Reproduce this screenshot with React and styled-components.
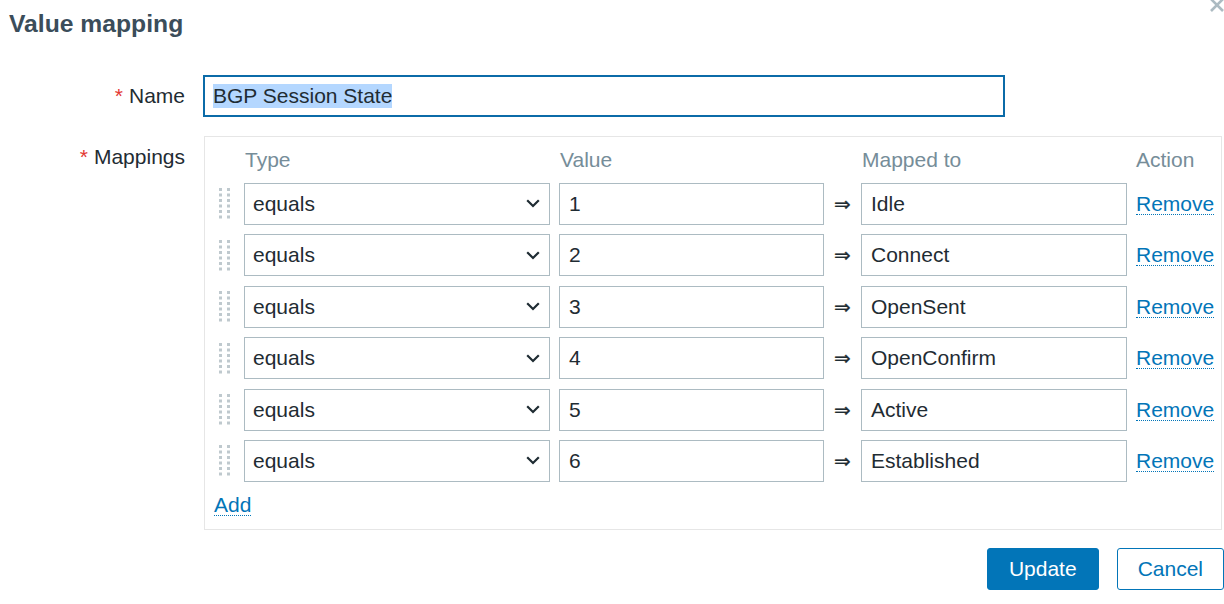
import React from "react";
import styled, { createGlobalStyle } from "styled-components";

const Global = createGlobalStyle`
  html, body { margin: 0; padding: 0; background: #fff; }
  body { font-family: "Liberation Sans", Arial, sans-serif; color: #1f2c33; }
  * { box-sizing: border-box; }
`;

const Dialog = styled.div`
  position: relative;
  width: 1224px;
  height: 604px;
  overflow: hidden;
`;

const Title = styled.h1`
  margin: 9px 0 0 9px;
  font-size: 24.7px;
  line-height: 30px;
  font-weight: bold;
  color: #3b4d5a;
`;

const Close = styled.button`
  position: absolute;
  top: -4px;
  right: -2px;
  width: 18px;
  height: 18px;
  padding: 0;
  border: 0;
  background: none;
  color: #acbbc2;
`;

const Form = styled.div`
  display: grid;
  grid-template-columns: 185px 1fr;
  column-gap: 18px;
  row-gap: 19px;
  margin-top: 36px;
  padding-right: 2px;
`;

const Label = styled.label`
  text-align: right;
  font-size: 21px;
  line-height: 42px;
  color: #1f2c33;
`;

const Req = styled.span`
  color: #e33734;
  margin-right: 6px;
`;

const NameBox = styled.div`
  width: 802px;
  height: 42px;
  border: 2px solid #0b6ba8;
  padding: 0 8px;
  display: flex;
  align-items: center;
  font-size: 21px;
  color: #1f2c33;
`;

const Selected = styled.span`
  background: #b4d7ff;
`;

const Table = styled.div`
  margin-left: 1px;
  border: 1px solid #e6e6e6;
  padding: 11px 0 10px;
`;

const COLS = "30px 306px 265px 19px 266px auto";

const HeaderRow = styled.div`
  display: grid;
  grid-template-columns: ${COLS};
  column-gap: 9px;
  height: 24px;
  margin-bottom: 6.3px;
  font-size: 21px;
  line-height: 24px;
  color: #768d99;
`;

const HeadCell = styled.div`
  padding-left: ${(p) => (p.$flush ? 0 : 1)}px;
`;

const Row = styled.div`
  display: grid;
  grid-template-columns: ${COLS};
  column-gap: 9px;
  align-items: center;
  height: 51.4px;
`;

const Handle = styled.div`
  padding-left: 14px;
  display: flex;
  align-items: center;
`;

const Select = styled.div`
  height: 42px;
  border: 1px solid #acbbc2;
  padding: 0 9px 0 8px;
  display: flex;
  align-items: center;
  justify-content: space-between;
  font-size: 21px;
  color: #1f2c33;
`;

const Input = styled.div`
  height: 42px;
  border: 1px solid #acbbc2;
  padding: 0 9px;
  display: flex;
  align-items: center;
  font-size: 21px;
  color: #1f2c33;
`;

const Arrow = styled.div`
  display: flex;
  justify-content: center;
  font-family: "DejaVu Sans", sans-serif;
  font-size: 20px;
  color: #1f2c33;
  -webkit-text-stroke: 0.3px #1f2c33;
`;

const Link = styled.a`
  justify-self: start;
  display: inline-block;
  font-size: 21px;
  line-height: 21px;
  color: #0275b8;
  text-decoration: none;
  border-bottom: 1px dotted #0275b8;
  cursor: pointer;
`;

const AddWrap = styled.div`
  padding: 7px 0 0 9px;
  height: 32px;
`;

const Footer = styled.div`
  display: flex;
  justify-content: flex-end;
  gap: 18px;
  margin-top: 18px;
`;

const Button = styled.button`
  height: 42px;
  padding: 0 ${(p) => (p.$primary ? 21 : 20)}px;
  border-radius: 3px;
  border: 1px solid #0275b8;
  background: ${(p) => (p.$primary ? "#0275b8" : "#fff")};
  color: ${(p) => (p.$primary ? "#fff" : "#0275b8")};
  font-family: "Liberation Sans", Arial, sans-serif;
  font-size: 21px;
`;

const DragIcon = () => (
  <svg width="12" height="31" viewBox="0 0 12 31">
    {[0, 1, 2, 3, 4, 5].map((r) =>
      [0, 8].map((c) => (
        <rect key={`${r}-${c}`} x={c} y={r * 5.5} width="3" height="3" fill="#bfc9ce" />
      ))
    )}
  </svg>
);

const Chevron = () => (
  <svg width="14" height="9" viewBox="0 0 14 9">
    <path d="M1.2 1.2 L7 7 L12.8 1.2" fill="none" stroke="#1f2c33" strokeWidth="2.2" />
  </svg>
);

const rows = [
  ["1", "Idle"],
  ["2", "Connect"],
  ["3", "OpenSent"],
  ["4", "OpenConfirm"],
  ["5", "Active"],
  ["6", "Established"],
];

export default function App() {
  return (
    <>
      <Global />
      <Dialog>
        <Title>Value mapping</Title>
        <Close aria-label="Close">
          <svg width="18" height="18" viewBox="0 0 18 18">
            <path d="M3 3 L15 15 M15 3 L3 15" stroke="currentColor" strokeWidth="2.6" />
          </svg>
        </Close>
        <Form>
          <Label>
            <Req>*</Req>Name
          </Label>
          <div>
            <NameBox>
              <Selected>BGP Session State</Selected>
            </NameBox>
          </div>
          <Label>
            <Req>*</Req>Mappings
          </Label>
          <Table>
            <HeaderRow>
              <div />
              <HeadCell>Type</HeadCell>
              <HeadCell>Value</HeadCell>
              <div />
              <HeadCell>Mapped to</HeadCell>
              <HeadCell $flush>Action</HeadCell>
            </HeaderRow>
            {rows.map(([v, m]) => (
              <Row key={v}>
                <Handle>
                  <DragIcon />
                </Handle>
                <Select>
                  <span>equals</span>
                  <Chevron />
                </Select>
                <Input>{v}</Input>
                <Arrow>⇒</Arrow>
                <Input>{m}</Input>
                <Link>Remove</Link>
              </Row>
            ))}
            <AddWrap>
              <Link>Add</Link>
            </AddWrap>
          </Table>
        </Form>
        <Footer>
          <Button $primary>Update</Button>
          <Button>Cancel</Button>
        </Footer>
      </Dialog>
    </>
  );
}
